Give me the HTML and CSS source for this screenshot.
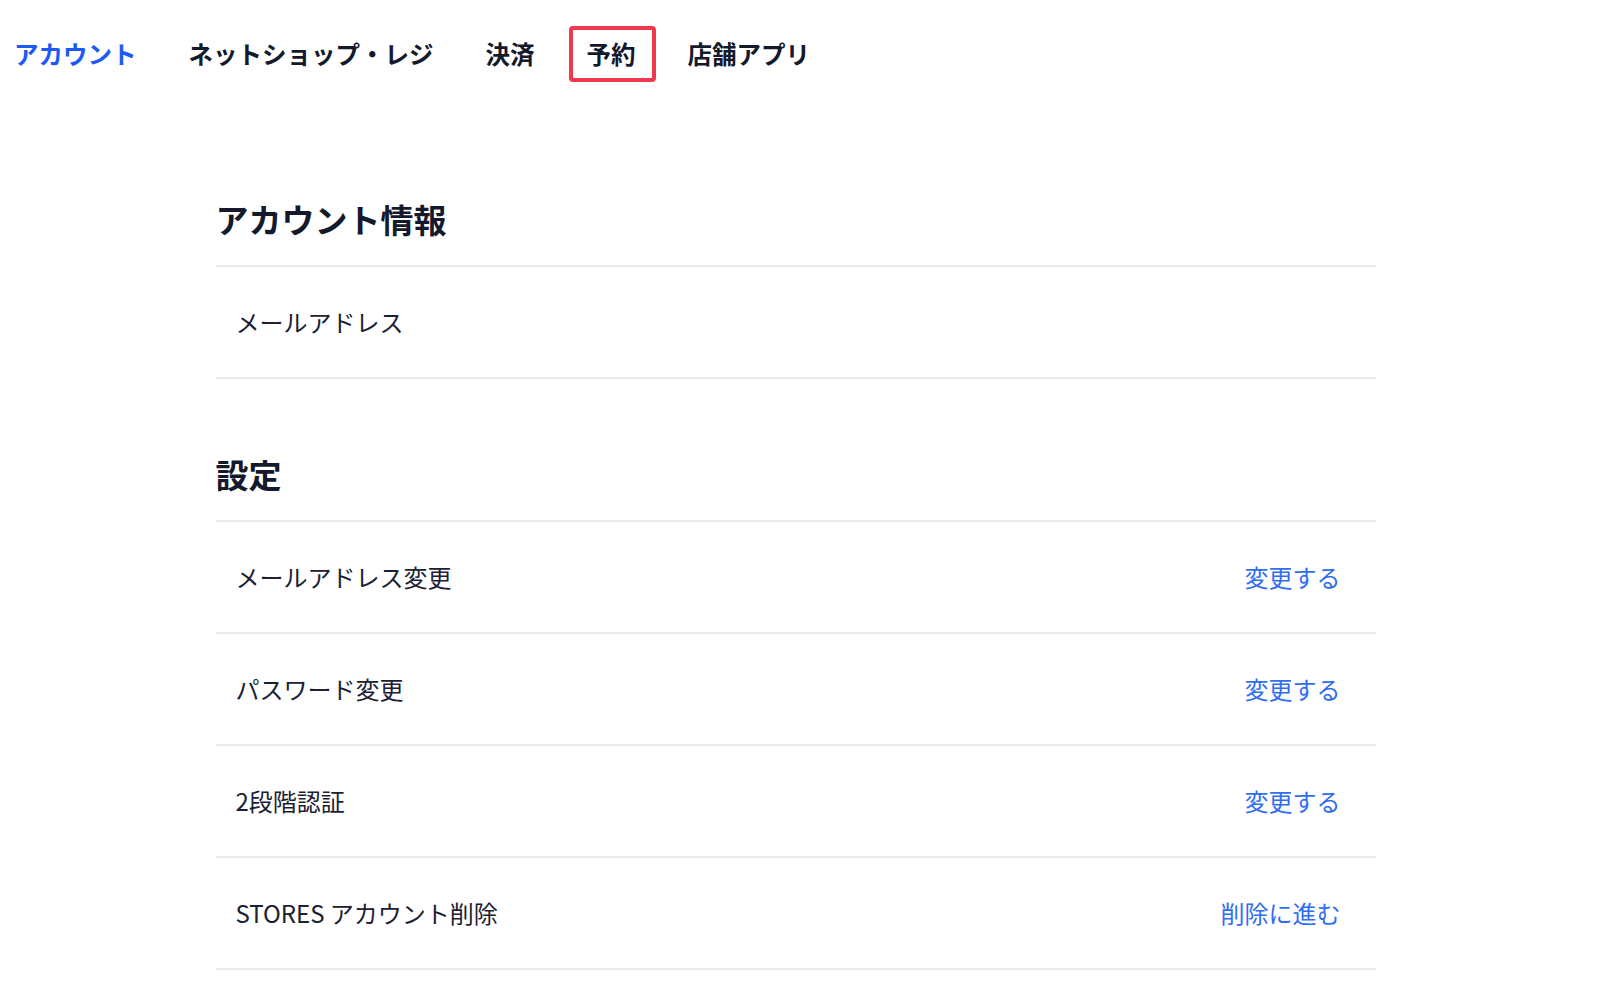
FILE: index.html
```html
<!DOCTYPE html>
<html lang="ja">
<head>
<meta charset="utf-8">
<title>アカウント</title>
<link rel="stylesheet" href="styles.css">
</head>
<body>
<div class="page">
<nav class="nav">
  <span class="nav-item is-current">アカウント</span>
  <span class="nav-item">ネットショップ・レジ</span>
  <span class="nav-item">決済</span>
  <span class="nav-item is-marked">予約</span>
  <span class="nav-item">店舗アプリ</span>
</nav>
<main class="content">
  <section class="section">
    <h2 class="section-title">アカウント情報</h2>
    <ul class="rows">
      <li class="row"><span class="row-label">メールアドレス</span></li>
    </ul>
  </section>
  <section class="section">
    <h2 class="section-title">設定</h2>
    <ul class="rows">
      <li class="row"><span class="row-label">メールアドレス変更</span><a class="row-link" href="#">変更する</a></li>
      <li class="row"><span class="row-label">パスワード変更</span><a class="row-link" href="#">変更する</a></li>
      <li class="row"><span class="row-label">2段階認証</span><a class="row-link" href="#">変更する</a></li>
      <li class="row"><span class="row-label">STORES アカウント削除</span><a class="row-link" href="#">削除に進む</a></li>
    </ul>
  </section>
</main>
</div>
</body>
</html>
```
FILE: styles.css
```css
* { box-sizing: border-box; }
html, body { margin: 0; padding: 0; background: #ffffff; }
body {
  font-family: "Noto Sans CJK JP", "Noto Sans", sans-serif;
  color: #1b2132;
}
.page { padding-right: 15px; }
.nav {
  display: flex;
  align-items: center;
  gap: 14px;
  padding: 26px 0 0 0;
}
.nav-item {
  display: block;
  padding: 10px 16px 10px 14px;
  border: 4px solid transparent;
  border-radius: 4px;
  font-size: 24.5px;
  line-height: 28px;
  font-weight: 700;
  color: #141a2b;
  white-space: nowrap;
}
.nav-item:first-child { padding-left: 10px; }
.nav-item.is-current { color: #1d5af5; }
.nav-item.is-marked { border-color: #f0384f; }
.content {
  width: 1160px;
  margin: 113px auto 0;
}
.section + .section { margin-top: 71px; }
.section-title {
  margin: 0 0 22px;
  font-size: 33px;
  line-height: 48px;
  font-weight: 700;
  color: #141a2b;
}
.rows {
  list-style: none;
  margin: 0;
  padding: 0;
  border-top: 2px solid #ebebe8;
}
.row {
  display: flex;
  align-items: center;
  justify-content: space-between;
  height: 112px;
  padding: 0 35px 0 20px;
  border-bottom: 2px solid #ebebe8;
  font-size: 24px;
  line-height: 32px;
}
.row-label { color: #1b2132; }
.row-link {
  color: #2f6df2;
  text-decoration: none;
}
```
